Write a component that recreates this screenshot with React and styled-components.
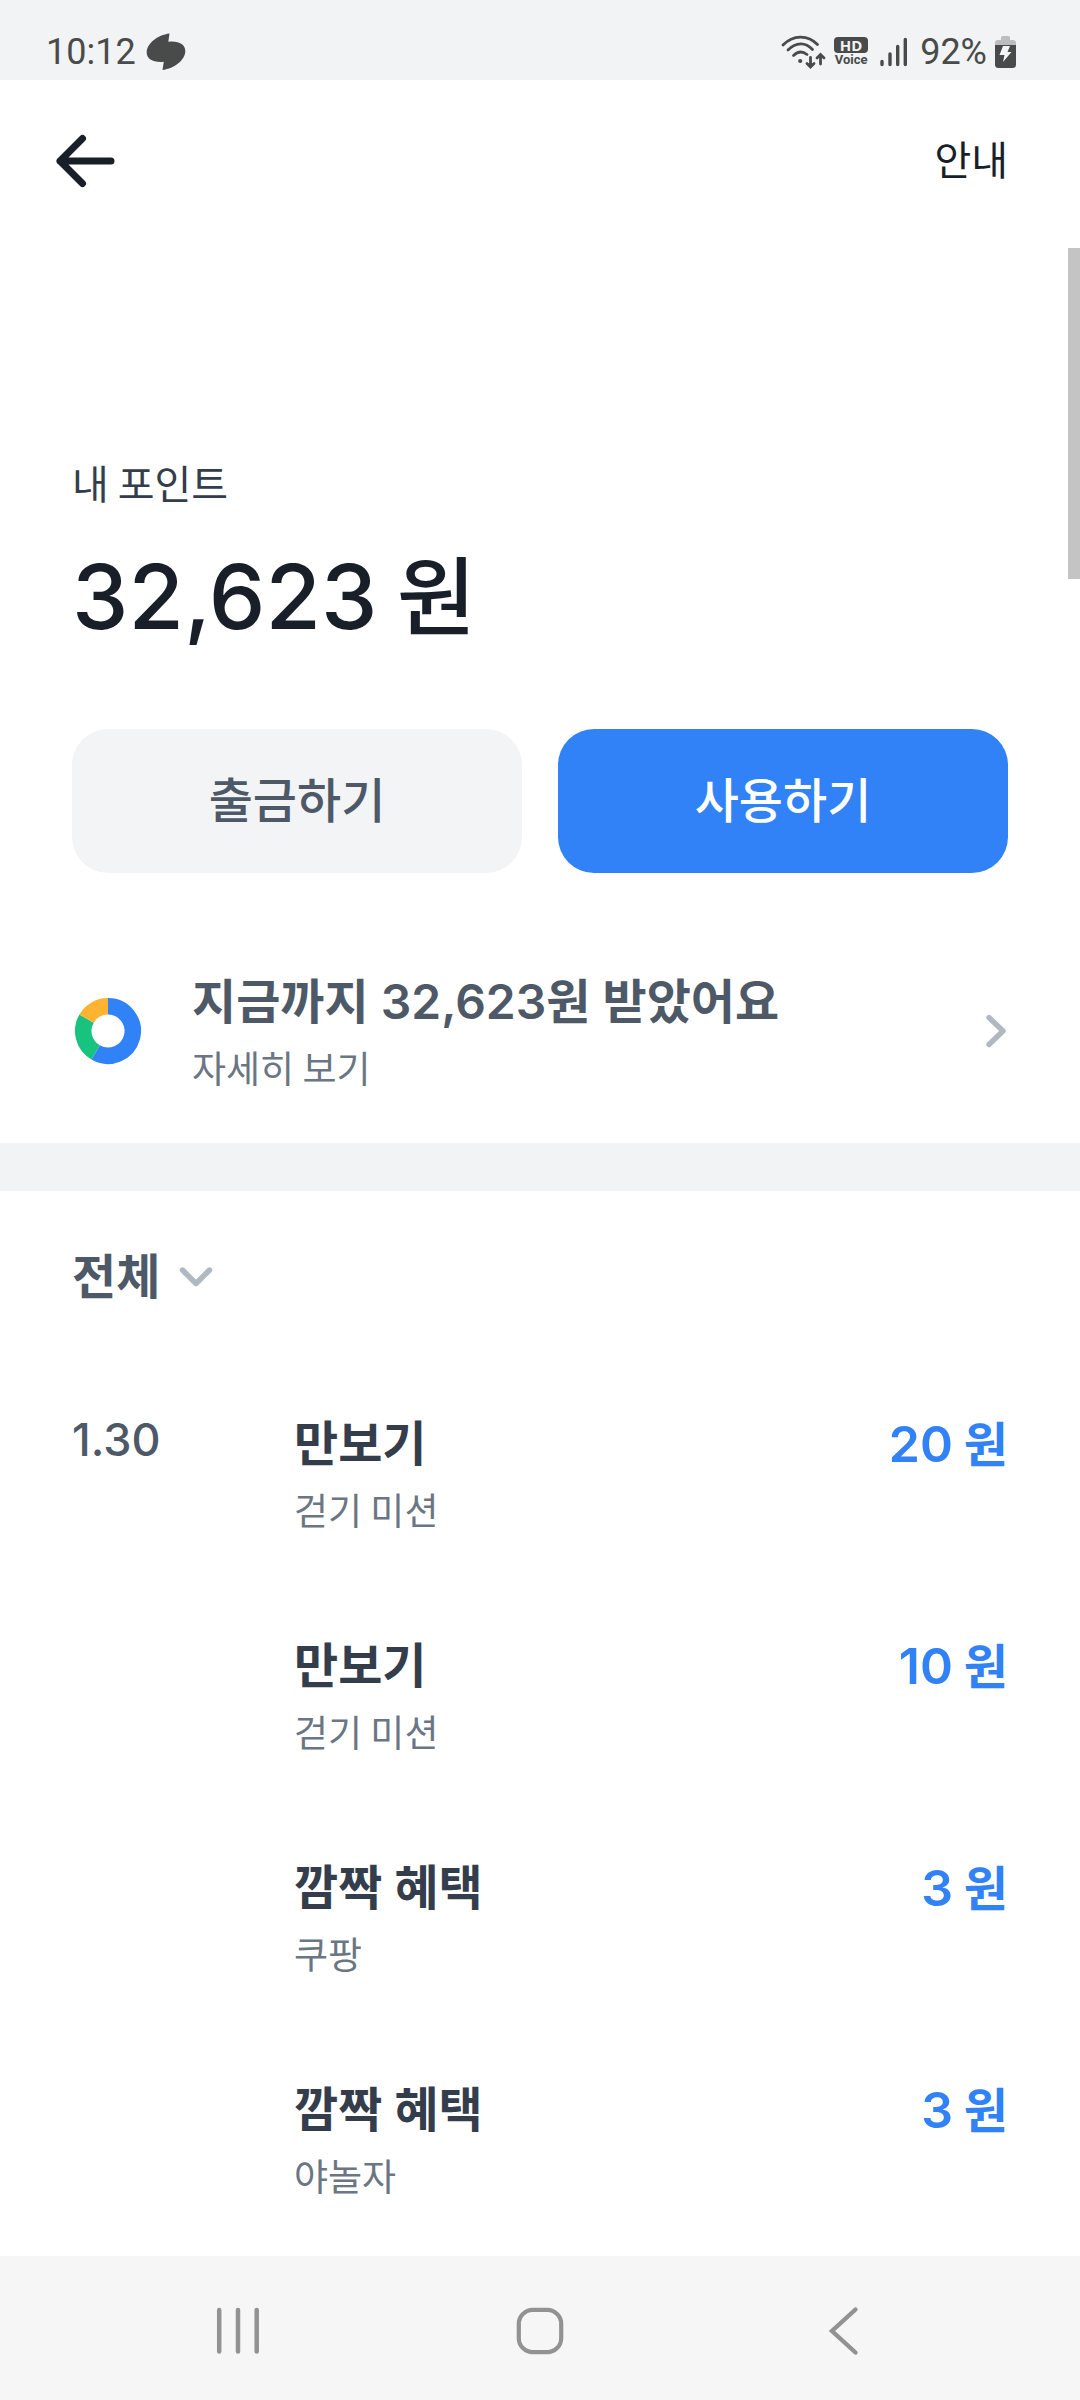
import React from "react";
import styled, { createGlobalStyle } from "styled-components";

const GlobalStyle = createGlobalStyle`
  *, *::before, *::after { box-sizing: border-box; }
  body {
    margin: 0;
    background: #ffffff;
    color: #191f28;
    font-family: Inter, "Noto Sans CJK KR", sans-serif;
  }
  button, select { font: inherit; color: inherit; border: 0; background: none; padding: 0; margin: 0; }
  button { cursor: pointer; }
  a { color: inherit; text-decoration: none; }
  h1, p, ul { margin: 0; padding: 0; font-weight: inherit; }
  ul { list-style: none; }
  svg { display: block; flex: none; }
`;

const Screen = styled.div`
  position: relative;
  min-height: 100vh;
  display: flex;
  flex-direction: column;
`;

const StatusBar = styled.div`
  height: 80px;
  padding: 22px 64px 0 46px;
  display: flex;
  justify-content: space-between;
  background: #f2f3f5;
  color: #494b4a;
  font-family: Roboto, sans-serif;
  font-size: 36px;
  font-weight: 400;
  line-height: 60px;
`;

const StatusGroup = styled.div`
  height: 60px;
  display: flex;
  align-items: center;
  gap: ${(p) => p.$gap}px;
`;

const VoiceBadge = styled.div`
  width: 34px;
  display: flex;
  flex-direction: column;
  align-items: center;
  font-size: 13px;
  font-weight: 700;
  line-height: 14px;
`;

const HdTag = styled.span`
  width: 34px;
  height: 16px;
  border-radius: 4px;
  background: #494b4a;
  color: #f2f3f5;
  font-family: "Open Sans", sans-serif;
  font-size: 15px;
  line-height: 16px;
  text-align: center;
`;

const Header = styled.header`
  height: 162px;
  padding: 0 72px 0 54px;
  display: flex;
  align-items: center;
  justify-content: space-between;
`;

const GuideLink = styled.a`
  font-size: 40px;
  line-height: 60px;
`;

const Content = styled.main`
  flex: 1;
`;

const PointSection = styled.section`
  padding: 210px 72px 47px;
`;

const PointLabel = styled.p`
  font-family: "Noto Sans CJK KR", sans-serif;
  font-size: 40px;
  line-height: 60px;
  color: #333d4b;
`;

const Balance = styled.h1`
  margin-top: 25px;
  font-size: 90px;
  font-weight: 500;
  line-height: 120px;
`;

const Unit = styled.span`
  font-family: "Noto Sans CJK KR", sans-serif;
  font-size: ${(p) => (p.$large ? 86 : 48)}px;
  line-height: 1;
`;

const Actions = styled.div`
  margin-top: 72px;
  display: flex;
  gap: 36px;
`;

const ActionButton = styled.button`
  flex: 1;
  height: 144px;
  border-radius: 36px;
  font-size: 48px;
  font-weight: 500;
  line-height: 72px;
  background: ${(p) => (p.$primary ? "#3182f6" : "#f2f4f6")};
  color: ${(p) => (p.$primary ? "#ffffff" : "#4e5968")};
`;

const SummaryLink = styled.a`
  margin-top: 93px;
  display: flex;
  align-items: center;
`;

const TextBlock = styled.div`
  flex: 1;
  display: flex;
  flex-direction: column;
`;

const SummaryText = styled(TextBlock)`
  margin-left: 48px;
`;

const Title = styled.span`
  font-size: 48px;
  font-weight: 600;
  line-height: 72px;
  color: ${(p) => (p.$soft ? "#4e5968" : "#333d4b")};
`;

const Caption = styled.span`
  font-family: "Noto Sans CJK KR", sans-serif;
  font-size: 37px;
  line-height: 58px;
  color: #6b7684;
`;

const Divider = styled.div`
  height: 48px;
  background: #f2f3f5;
`;

const HistorySection = styled.section`
  padding: 50px 72px 48px;
`;

const FilterLabel = styled.label`
  display: flex;
  width: fit-content;
  align-items: center;
  gap: 12px;
`;

const FilterSelect = styled.select`
  appearance: none;
  field-sizing: content;
  font-size: 48px;
  font-weight: 600;
  line-height: 72px;
  color: #4e5968;
`;

const HistoryList = styled.ul`
  margin-top: 95px;
  display: flex;
  flex-direction: column;
  gap: 92px;
`;

const HistoryItem = styled.li`
  display: grid;
  grid-template-columns: 222px 1fr auto;
  align-items: start;
`;

const DateText = styled.span`
  font-size: 45px;
  font-weight: 500;
  line-height: 64px;
  color: #4e5968;
`;

const Amount = styled.span`
  font-size: 50px;
  font-weight: 600;
  line-height: 72px;
  color: #3182f6;
`;

const NavBar = styled.nav`
  height: 144px;
  padding: 6px 86px 0;
  display: grid;
  grid-template-columns: repeat(3, 1fr);
  align-items: center;
  justify-items: center;
  background: #f6f6f6;
  color: #929292;
`;

const ScrollThumb = styled.div`
  position: absolute;
  top: 248px;
  right: 0;
  width: 12px;
  height: 331px;
  background: #c4c4c4;
`;

const LeafIcon = () => (
  <svg width="40" height="38" viewBox="0 0 40 38" fill="currentColor">
    <path d="M23.5 0.5L22.3 8.8C32 7.5 39.3 11 39.3 18C39.3 27 28.5 35.5 16.5 37L17.8 28.7C7.8 29.7 0.7 26.5 0.7 19.5C0.7 10.5 11.5 2 23.5 0.5Z" />
  </svg>
);

const WifiIcon = () => (
  <svg width="45" height="34" viewBox="0 0 45 34" fill="none" stroke="currentColor" strokeWidth="2.8" strokeLinecap="round">
    <path d="M2 10C12 -0.5 27 -0.5 36.5 9.5" />
    <path d="M7 15C15 7 24.5 7 31.5 14.5" />
    <path d="M12.5 20.5C17 16 21.5 16 26 19.5" />
    <circle cx="19.2" cy="26" r="2.1" fill="currentColor" stroke="none" />
    <path d="M29.5 22.5V31.5M26 28.5L29.5 32L33 28.5M39.5 29V20M36 23L39.5 19.5L43 23" />
  </svg>
);

const SignalIcon = () => (
  <svg width="28" height="30" viewBox="0 0 28 30" fill="none" stroke="currentColor" strokeWidth="3.4" strokeLinecap="round">
    <path d="M2 24.5V27.5M10 17V27.5M17.7 9.5V27.5M25.3 2.5V27.5" />
  </svg>
);

const BatteryIcon = () => (
  <svg width="21" height="32" viewBox="0 0 21 32">
    <path d="M6 1.5Q6 0 7.5 0H13.5Q15 0 15 1.5V4H18Q21 4 21 7V10H0V7Q0 4 3 4H6Z" fill="#bcbdbe" />
    <path d="M0 9H21V28.5Q21 32 17.5 32H3.5Q0 32 0 28.5Z" fill="#494b4a" />
    <path d="M8 10H15L12.5 16H16.5L8 26L9.5 19H4.5Z" fill="#f6f6f6" />
  </svg>
);

const BackIcon = () => (
  <svg width="64" height="60" viewBox="0 0 64 60" fill="none" stroke="currentColor" strokeWidth="7" strokeLinecap="round" strokeLinejoin="round">
    <path d="M28.5 7.5L6 30L28.5 52.5M6 30H57" />
  </svg>
);

const DonutIcon = () => (
  <svg width="72" height="72" viewBox="0 0 72 72" fill="none" strokeWidth="16.5">
    <path d="M36 11.25A24.75 24.75 0 1 1 23.625 57.434" stroke="#3182f6" />
    <path d="M23.625 57.434A24.75 24.75 0 0 1 14.566 23.625" stroke="#18c27f" />
    <path d="M14.566 23.625A24.75 24.75 0 0 1 36 11.25" stroke="#ffb331" />
  </svg>
);

const ChevronRight = () => (
  <svg width="24" height="36" viewBox="0 0 24 36" fill="none" stroke="#b0b8c1" strokeWidth="5.4" strokeLinecap="round" strokeLinejoin="round">
    <path d="M5 4.5L19 18L5 31.5" />
  </svg>
);

const ChevronDown = () => (
  <svg width="48" height="36" viewBox="0 0 48 36" fill="none" stroke="#b0b8c1" strokeWidth="5.4" strokeLinecap="round" strokeLinejoin="round">
    <path d="M10.5 11L24 24.5L37.5 11" />
  </svg>
);

const RecentsIcon = () => (
  <svg width="48" height="48" viewBox="0 0 48 48" fill="none" stroke="currentColor" strokeWidth="4.5" strokeLinecap="round">
    <path d="M6.2 3V44.5M25 3V44.5M43.7 3V44.5" />
  </svg>
);

const HomeIcon = () => (
  <svg width="48" height="48" viewBox="0 0 48 48" fill="none" stroke="currentColor" strokeWidth="4.2">
    <rect x="2.8" y="2.8" width="42.4" height="42.4" rx="14" />
  </svg>
);

const NavBackIcon = () => (
  <svg width="48" height="50" viewBox="0 0 48 50" fill="none" stroke="currentColor" strokeWidth="4.4" strokeLinecap="round">
    <path d="M36.5 3.5L13 25L36.5 46.5" />
  </svg>
);

const history = [
  { id: 1, date: "1.30", title: "만보기", caption: "걷기 미션", amount: 20 },
  { id: 2, title: "만보기", caption: "걷기 미션", amount: 10 },
  { id: 3, title: "깜짝 혜택", caption: "쿠팡", amount: 3 },
  { id: 4, title: "깜짝 혜택", caption: "야놀자", amount: 3 },
];

export default function App() {
  return (
    <Screen>
      <GlobalStyle />
      <StatusBar>
        <StatusGroup $gap={10}>
          <span>10:12</span>
          <LeafIcon />
        </StatusGroup>
        <StatusGroup $gap={12}>
          <StatusGroup $gap={8}>
            <WifiIcon />
            <VoiceBadge>
              <HdTag>HD</HdTag>
              <span>Voice</span>
            </VoiceBadge>
          </StatusGroup>
          <SignalIcon />
          <StatusGroup $gap={8}>
            <span>92%</span>
            <BatteryIcon />
          </StatusGroup>
        </StatusGroup>
      </StatusBar>

      <Header>
        <button type="button" aria-label="뒤로">
          <BackIcon />
        </button>
        <GuideLink href="#">안내</GuideLink>
      </Header>

      <Content>
        <PointSection>
          <PointLabel>내 포인트</PointLabel>
          <Balance>
            32,623<Unit $large> 원</Unit>
          </Balance>
          <Actions>
            <ActionButton type="button">출금하기</ActionButton>
            <ActionButton type="button" $primary>
              사용하기
            </ActionButton>
          </Actions>
          <SummaryLink href="#">
            <DonutIcon />
            <SummaryText>
              <Title $soft>지금까지 32,623원 받았어요</Title>
              <Caption>자세히 보기</Caption>
            </SummaryText>
            <ChevronRight />
          </SummaryLink>
        </PointSection>

        <Divider />

        <HistorySection>
          <FilterLabel>
            <FilterSelect aria-label="전체">
              <option>전체</option>
            </FilterSelect>
            <ChevronDown />
          </FilterLabel>
          <HistoryList>
            {history.map((item) => (
              <HistoryItem key={item.id}>
                <DateText>{item.date}</DateText>
                <TextBlock>
                  <Title>{item.title}</Title>
                  <Caption>{item.caption}</Caption>
                </TextBlock>
                <Amount>
                  {item.amount}
                  <Unit> 원</Unit>
                </Amount>
              </HistoryItem>
            ))}
          </HistoryList>
        </HistorySection>
      </Content>

      <NavBar>
        <button type="button" aria-label="최근 앱">
          <RecentsIcon />
        </button>
        <button type="button" aria-label="홈">
          <HomeIcon />
        </button>
        <button type="button" aria-label="이전">
          <NavBackIcon />
        </button>
      </NavBar>
      <ScrollThumb />
    </Screen>
  );
}
